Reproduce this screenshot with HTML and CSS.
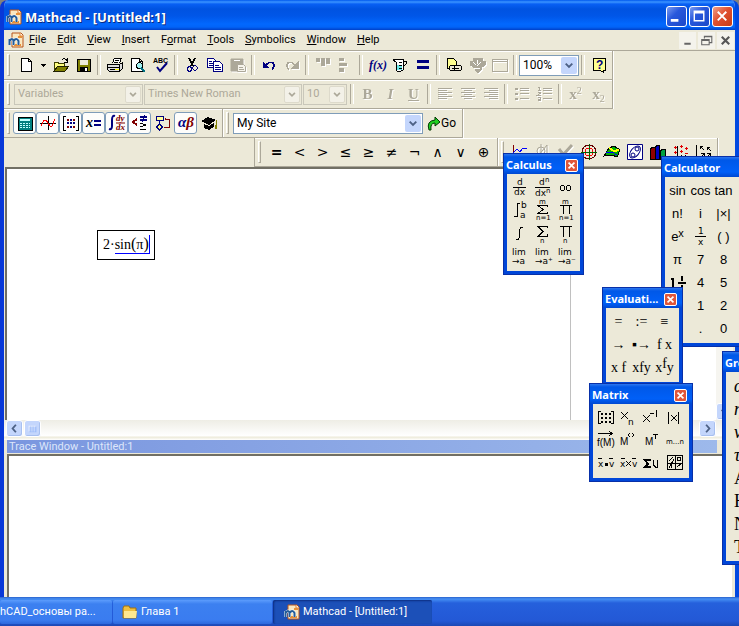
FILE: index.html
```html
<!DOCTYPE html>
<html lang="en">
<head>
<meta charset="utf-8">
<title>Mathcad - [Untitled:1]</title>
<link rel="stylesheet" href="styles.css">
</head>
<body>
<svg class="defs" aria-hidden="true">
  <symbol id="logo" viewBox="0 0 16 16">
    <path d="M4 1h9l2 2v12H4z" fill="#fbe8c0" stroke="#b8541c"/>
    <path d="M12 1v3h3" fill="#fff" stroke="#e08030"/>
    <path d="M6 13h7M10 5h4" stroke="#e89038" stroke-width="2" fill="none"/>
    <path d="M1.500 13V7M1.500 9q3-4 4 0v4M5.500 9q3-4 5 0v4" stroke="#f4f8ff" stroke-width="3" fill="none"/>
    <path d="M1.500 13V7M1.500 9q3-4 4 0v4M5.500 9q3-4 5 0v4" stroke="#245c98" stroke-width="2" fill="none"/>
  </symbol>
  <symbol id="chev" viewBox="0 0 16 18"><path d="M4.500 7l3.500 3.500L11.500 7" fill="none" stroke="currentColor" stroke-width="2"/></symbol>
  <symbol id="x" viewBox="0 0 13 13"><path d="M3 3l7 7M10 3l-7 7" stroke="#fff" stroke-width="2"/></symbol>
</svg>
<main class="window">
  <header class="titlebar">
    <svg class="ico"><use href="#logo"/></svg>
    <h1>Mathcad - [Untitled:1]</h1>
    <button class="cap" aria-label="Minimize"><svg viewBox="0 0 20 20"><path d="M4 14h8" stroke="#fff" stroke-width="3"/></svg></button>
    <button class="cap" aria-label="Maximize"><svg viewBox="0 0 20 20"><path d="M4.500 4.500h10v10h-10zM4 6h11" fill="none" stroke="#fff" stroke-width="1.500"/></svg></button>
    <button class="cap close" aria-label="Close"><svg viewBox="0 0 20 20"><path d="M5 5l9 9M14 5l-9 9" stroke="#fff" stroke-width="2"/></svg></button>
  </header>
  <nav class="menubar">
    <svg class="ico"><use href="#logo"/></svg>
    <button><u>F</u>ile</button><button><u>E</u>dit</button><button><u>V</u>iew</button><button><u>I</u>nsert</button><button>F<u>o</u>rmat</button><button><u>T</u>ools</button><button><u>S</u>ymbolics</button><button><u>W</u>indow</button><button><u>H</u>elp</button>
    <span class="mdi">
      <button aria-label="Minimize document"><svg viewBox="0 0 16 16"><path d="M5 11h6" stroke="#666" stroke-width="2"/></svg></button>
      <button aria-label="Restore document"><svg viewBox="0 0 16 16"><path d="M6 6V4h7v6h-2M6 4.500h7M3.500 7h7v5h-7zM3 8h8" fill="none" stroke="#666"/></svg></button>
      <button aria-label="Close document"><svg viewBox="0 0 16 16"><path d="M4.500 4.500l7 7M11.500 4.500l-7 7" stroke="#555" stroke-width="2"/></svg></button>
    </span>
  </nav>

  <div class="row">
    <div class="bar">
      <i class="grip"></i>
      <button aria-label="New"><svg class="ico px"><path d="M3.500 1.500h7l3 3v10h-10zM10.500 1.500v3h3" fill="#fff" stroke="#000"/></svg></button>
      <button class="narrow" aria-label="New from template"><svg class="ico px"><path d="M6 7h5v1H6zM7 8h3v1H7zM8 9h1v1H8z"/></svg></button>
      <button aria-label="Open"><svg class="ico px"><path d="M1.500 14V5h3l1 1h6v3" fill="#ffff80" stroke="#404000"/><path d="M1 14l4-5h11l-4 5z" fill="#808000" stroke="#202000"/><path d="M9 3q3-3 5 1M14 1v4h-3" fill="none" stroke="#000"/></svg></button>
      <button aria-label="Save"><svg class="ico px"><path d="M1.500 2.500h13v12h-13z" fill="#808000" stroke="#000"/><path d="M4 3h8v5H4z" fill="#ece9d8"/><path d="M4 10h8v5H4z"/><path d="M9 11h2v3H9z" fill="#fff"/></svg></button>
      <i class="sep"></i>
      <button aria-label="Print"><svg class="ico px"><path d="M5.500 6l2-5h7l-2 5" fill="#fff" stroke="#000"/><path d="M8 3h4M7 5h4" stroke="#000"/><path d="M0.500 7.500h12l3-2v6l-3 3h-10l-2-2z" fill="#ddd" stroke="#000"/><path d="M1 10h11M3 12h9M12 8v6" stroke="#000"/><path d="M8 12h4v1H8z" fill="#ff0"/></svg></button>
      <button aria-label="Print preview"><svg class="ico px"><path d="M1.500 1.500h8l3 3v10h-11zM9.500 1.500v3h3" fill="#fff" stroke="#000"/><circle cx="9.500" cy="8.500" r="3" fill="#a0f0f0" stroke="#000"/><path d="M11 11l4 4" stroke="#007080" stroke-width="2"/></svg></button>
      <button aria-label="Check spelling"><svg class="ico"><text x="0" y="6" class="tiny">ABC</text><path d="M4 10l3 4 7-8" fill="none" stroke="#000080" stroke-width="2"/></svg></button>
      <i class="sep"></i>
      <button aria-label="Cut"><svg class="ico px"><path d="M5 1l4 8M11 1L7 9" stroke="#000" stroke-width="1.500"/><g fill="none" stroke="#000080"><circle cx="5.500" cy="12" r="2.200"/><circle cx="11" cy="11" r="2.200"/></g></svg></button>
      <button aria-label="Copy"><svg class="ico px"><g fill="#fff" stroke="#000080"><path d="M.5 1.500h6l3 3v6h-9z"/><path d="M6.500 4.500h6l3 3v7h-9z"/></g><path d="M2 4h3M2 6h4M2 8h4M8 8h4M8 10h6M8 12h6" stroke="#000080"/></svg></button>
      <button aria-label="Paste" disabled><svg class="ico"><path d="M1 2h12v12H1z" fill="#aca899"/><path d="M4 3.500h6" stroke="#fff"/><path d="M7.500 7.500h6l2 2v5h-8zM9 10.500h4M9 12.500h5" fill="#f6f4ec"/></svg></button>
      <i class="sep"></i>
      <button aria-label="Undo"><svg class="ico px"><path d="M2 5v6h6z" fill="#000080"/><path d="M5 8q3-4 7-2q3 3-1 6" fill="none" stroke="#000080" stroke-width="1.500"/></svg></button>
      <button aria-label="Redo" disabled><svg class="ico px"><path d="M14 5v6H8z" fill="#aca899"/><path d="M11 8q-3-4-7-2q-3 3 1 6" fill="none" stroke="#aca899" stroke-width="1.500"/></svg></button>
      <i class="sep"></i>
      <button aria-label="Align across" disabled><svg class="ico solid"><path d="M1 1h4v4H1zM6 1h4v8H6zM11 1h4v6h-4z" fill="#aca899"/></svg></button>
      <button aria-label="Align down" disabled><svg class="ico solid"><path d="M1 1h5v3H1zM1 6h8v3H1zM1 11h5v4H1z" fill="#aca899"/></svg></button>
      <i class="sep"></i>
      <button aria-label="Insert function"><svg class="ico"><text x="0" y="12" class="fx">f(x)</text></svg></button>
      <button aria-label="Insert unit"><svg class="ico px"><path d="M1 3l2-1h8v11l-2 1H5l-1-1V5z" fill="#fff" stroke="#000"/><path d="M5 8h5v5H5z" fill="#6ce8e8"/><path d="M11 4h3v3l-3 3M7 5h3M7 8h3M7 11h3" fill="none" stroke="#000"/></svg></button>
      <button aria-label="Calculate"><svg class="ico px"><path d="M2 3h12v3H2zM2 9h12v3H2z" fill="#000080"/></svg></button>
      <i class="sep"></i>
      <button aria-label="Insert hyperlink"><svg class="ico px"><path d="M1.500 1.500h6l3 3v7h-9z" fill="#ffff90" stroke="#000"/><g fill="#ece9d8" stroke="#000"><rect x="3.500" y="8.500" width="7" height="5" rx="2"/><rect x="8.500" y="8.500" width="7" height="5" rx="2"/><path d="M6 11.500h7"/></g></svg></button>
      <button aria-label="Insert component" disabled><svg class="ico px"><path d="M1 4h3V1h4v3h1V1h4v3h3v4l-4 3v2l-3 3-3-3v-2L1 8z" fill="#aca899"/><path d="M4 5l3 3M12 5L8 9M6 11h5M8 3v4" class="light"/></svg></button>
      <button aria-label="Insert area" disabled><svg class="ico px"><path d="M.5 2.500h15v12H.5zM1 4h14" fill="none"/></svg></button>
      <i class="sep"></i>
      <label class="combo zoom"><select aria-label="Zoom"><option>100%</option></select><svg><use href="#chev"/></svg></label>
      <i class="sep"></i>
      <button aria-label="Help"><svg class="ico px"><path d="M2.500 1.500h12v12h-2v2l-3-2h-7z" fill="#ffff90" stroke="#000"/><text x="5" y="12" class="q">?</text></svg></button>
    </div>
  </div>

  <div class="row">
    <div class="bar">
      <i class="grip"></i>
      <label class="combo off style"><select aria-label="Style" disabled><option>Variables</option></select><svg><use href="#chev"/></svg></label>
      <label class="combo off face"><select aria-label="Font" disabled><option>Times New Roman</option></select><svg><use href="#chev"/></svg></label>
      <label class="combo off size"><select aria-label="Font size" disabled><option>10</option></select><svg><use href="#chev"/></svg></label>
      <i class="sep"></i>
      <button class="fmt" disabled><b>B</b></button>
      <button class="fmt" disabled><b><em>I</em></b></button>
      <button class="fmt" disabled><b><u>U</u></b></button>
      <i class="sep"></i>
      <button aria-label="Align left" disabled><svg class="ico px"><path d="M1 2.500h14M1 4.500h9M1 6.500h14M1 8.500h9M1 10.500h14M1 12.500h9"/></svg></button>
      <button aria-label="Center" disabled><svg class="ico px"><path d="M1 2.500h14M4 4.500h8M1 6.500h14M4 8.500h8M1 10.500h14M4 12.500h8"/></svg></button>
      <button aria-label="Align right" disabled><svg class="ico px"><path d="M1 2.500h14M6 4.500h9M1 6.500h14M6 8.500h9M1 10.500h14M6 12.500h9"/></svg></button>
      <i class="sep"></i>
      <button aria-label="Bullets" disabled><svg class="ico px"><path d="M6 2.500h9M6 4.500h9M6 7.500h9M6 12.500h9M1 2.500h3M1 3.500h3M1 7.500h3M1 8.500h3M1 12.500h3M1 13.500h3"/></svg></button>
      <button aria-label="Numbering" disabled><svg class="ico px"><path d="M6 2.500h9M6 4.500h9M6 7.500h9M6 12.500h9"/><path d="M1 1.500h1v3M1 4.500h3M1 6.500h2v1l-2 1.500h3M1 11.500h2v3H1M1 13h2"/></svg></button>
      <i class="sep"></i>
      <button class="fmt" disabled><b>x</b><sup>2</sup></button>
      <button class="fmt" disabled><b>x</b><sub>2</sub></button>
    </div>
  </div>

  <div class="row">
    <div class="bar math">
      <i class="grip"></i>
      <button class="on" aria-label="Calculator"><svg class="ico px"><path d="M1 2h14v13H1z" fill="#008080" stroke="#000"/><path d="M3 4h10v2H3z" fill="#c0ffff"/><path d="M3 8.500h10M3 10.500h10M3 12.500h10" stroke="#c0ffff" stroke-dasharray="2 1"/></svg></button>
      <button class="on" aria-label="Graph"><svg class="ico px"><path d="M0 8.500h16M8.500 1v14" stroke="#000"/><path d="M1 11l3-6h2l4 6h2l3-7" fill="none" stroke="#f00"/></svg></button>
      <button class="on" aria-label="Matrix"><svg class="ico px"><path d="M3 1H.5v14H3M13 1h2.500v14H13" fill="none" stroke="#000"/><path d="M4 4h2v2H4zM10 4h2v2h-2zM4 11h2v2H4zM10 11h2v2h-2z" fill="#800000"/><path d="M7 4h2v2H7zM4 7h2v2H4zM7 7h2v2H7zM10 7h2v2h-2zM7 11h2v2H7z" fill="#000080"/></svg></button>
      <button class="on" aria-label="Evaluation"><svg class="ico"><text x="0" y="12" class="xe">x</text><path d="M8 6h7M8 10h7" stroke="#000080" stroke-width="2"/></svg></button>
      <button class="on" aria-label="Calculus"><svg class="ico"><path d="M6 1q-3-1-3 4v6q0 4-3 3" fill="none" stroke="#000080" stroke-width="2"/><path d="M7 8h9" stroke="#800000"/><text x="7" y="6" class="dy">dy</text><text x="7" y="15" class="dy">dx</text></svg></button>
      <button class="on" aria-label="Boolean"><svg class="ico px"><path d="M5 4L1 7l4 3" fill="none" stroke="#800000" stroke-width="2"/><path d="M8 2h7M8 5h7" stroke="#000080" stroke-width="2"/><path d="M13 0l-3 7" stroke="#000080"/><path d="M8 8l6 2-6 2M8 14.500h6" fill="none" stroke="#000"/></svg></button>
      <button aria-label="Programming"><svg class="ico px"><path d="M1 1.500h7v4H1z" fill="#ffffa0" stroke="#000080"/><path d="M4.500 6v3M4.500 9l3 3-3 3-3-3z" fill="#ffff80" stroke="#000080"/><path d="M10 4h4v8H9" fill="none" stroke="#800000"/><path d="M9 4l2-2v4z" fill="#800000"/></svg></button>
      <button class="on" aria-label="Greek"><svg class="ico"><text x="0" y="12" class="ab" fill="#000080">α<tspan fill="#800000">β</tspan></text></svg></button>
      <button aria-label="Symbolic"><svg class="ico px"><path d="M0 6l7-4 8 3-7 5z"/><path d="M3 9l5 2 5-3v4l-5 3-5-2z"/><path d="M15 5v5" stroke="#808000"/><path d="M14 10h2v4h-2z" fill="#808000"/></svg></button>
    </div>
    <div class="bar">
      <i class="grip"></i>
      <label class="combo site"><select aria-label="Resources"><option>My Site</option></select><svg><use href="#chev"/></svg></label>
      <button class="go"><svg class="ico"><path d="M3 15q-3-9 6-10V2l5 5-5 4V8q-5 0-4 7z" fill="#20d020" stroke="#003800"/></svg>Go</button>
    </div>
  </div>

  <div class="row right">
    <div class="bar bool">
      <i class="grip"></i>
      <button><b>=</b></button><button>&lt;</button><button>&gt;</button><button>≤</button><button>≥</button><button>≠</button><button>¬</button><button>∧</button><button>∨</button><button>⊕</button>
    </div>
    <div class="bar">
      <i class="grip"></i>
      <button aria-label="X-Y plot"><svg class="ico px"><path d="M1.500 1v12M0 12.500h15" stroke="#800000"/><path d="M1 9l4-4 3 3 3-4h4" fill="none" stroke="#00f"/></svg></button>
      <button aria-label="Zoom graph" disabled><svg class="ico"><circle cx="6" cy="7" r="4"/><path d="M6 0v15M3 12l9-11M12 1v13"/></svg></button>
      <button aria-label="Trace" disabled><svg class="ico thick"><path d="M1 5l5 6M5 11l9-10"/></svg></button>
      <button aria-label="Polar plot"><svg class="ico px"><circle cx="8" cy="8" r="7" fill="none" stroke="#600000"/><circle cx="8" cy="8" r="4" fill="none" stroke="#f00"/><path d="M0 8h16M8 0v16" stroke="#006000"/></svg></button>
      <button aria-label="Surface plot"><svg class="ico px"><path d="M0 12l5-8 5-2 6 4-3 7-5-2z" fill="#00b000" stroke="#000"/><path d="M5 4l5 3 5-1" stroke="#ff0" stroke-width="2" fill="none"/><path d="M2 9l6-1 5 3" stroke="#00f" fill="none"/></svg></button>
      <button aria-label="Contour plot"><svg class="ico"><path d="M.5.500h15v15H.5z" fill="#fff" stroke="#000080"/><g fill="none" stroke="#000080"><ellipse cx="8" cy="8" rx="7" ry="4" transform="rotate(-50 8 8)"/><circle cx="10" cy="5" r="2"/><circle cx="6" cy="11" r="2"/></g></svg></button>
      <button aria-label="Bar plot"><svg class="ico px"><path d="M.5 5l2-2h3v12h-5z" fill="#900000" stroke="#000"/><path d="M5.500 3l2-2h2v14h-4z" fill="#0000c0" stroke="#000"/><path d="M10.500 7l2-2h3v10h-5z" fill="#00a040" stroke="#000"/></svg></button>
      <button aria-label="Scatter plot"><svg class="ico px"><path d="M4.500 2v12M2 13.500h14M8.500 11v4M12.500 11v4" stroke="#000"/><path d="M1 3.500h3M2.500 2v3M7 2.500h3M8.500 1v3M12 4.500h3M13.500 3v3M7 7.500h3M8.500 6v3M1 8.500h3M2.500 7v3M12 9.500h3" stroke="#e00000"/></svg></button>
      <button aria-label="Vector field plot"><svg class="ico px"><path d="M.5 1v14M4 5V2h3M4 2l4 4M11 6V3h3M11 3l4 4M5 14l3-4M5 9h3v3M11 14l3-4M11 9h3v3" fill="none" stroke="#000"/></svg></button>
    </div>
  </div>

  <section class="doc">
    <div class="sheet">
      <div class="region">2·<span class="edit">sin<span class="par">(</span>π<span class="par">)</span></span></div>
      <i class="margin"></i>
    </div>
    <div class="vscroll"><button class="sb" aria-label="Scroll down"><svg><use href="#chev"/></svg></button></div>
  </section>
  <div class="hscroll">
    <button class="sb" aria-label="Scroll left"><svg viewBox="0 0 16 16"><path d="M9.500 4L6 8l3.500 4" fill="none" stroke="#4d6185" stroke-width="2"/></svg></button>
    <button class="sb" aria-label="Scroll thumb"><svg viewBox="0 0 16 16"><path d="M4.500 5v6M6.500 5v6M8.500 5v6M10.500 5v6" stroke="#fff"/><path d="M5.500 6v6M7.500 6v6M9.500 6v6M11.500 6v6" stroke="#8cb0f8"/></svg></button>
    <i></i>
    <button class="sb" aria-label="Scroll right"><svg viewBox="0 0 16 16"><path d="M6.500 4L10 8l-3.500 4" fill="none" stroke="#4d6185" stroke-width="2"/></svg></button>
  </div>
  <h2 class="tracecap">Trace Window - Untitled:1</h2>
  <section class="trace"></section>
</main>

<footer class="taskbar">
  <button class="first">hCAD_основы ра...</button>
  <button><svg class="ico"><path d="M1 4l1-2h5l1 2h6v10H1z" fill="#f0c040" stroke="#a07010"/><path d="M2 7h13l-1 7H2z" fill="#ffe890"/></svg>Глава 1</button>
  <button class="active"><svg class="ico"><use href="#logo"/></svg>Mathcad - [Untitled:1]</button>
</footer>

<aside class="pal calculator">
  <header><h3>Calculator</h3></header>
  <div class="keys big">
    <button>sin</button><button>cos</button><button>tan</button>
    <button>n!</button><button>i</button><button>|×|</button>
    <button>e<sup>x</sup></button><button aria-label="Reciprocal"><svg class="key"><text x="9" y="9" class="s">1</text><path d="M6 11.500h11"/><text x="9" y="20" class="s">x</text></svg></button><button>( )</button>
    <button>π</button><button>7</button><button>8</button>
    <button aria-label="Mixed number"><svg class="key"><path d="M7 7v10M5 8h2M12 12h8M16 5v5M16 14v5" stroke-width="2"/></svg></button><button>4</button><button>5</button>
    <i></i><button>1</button><button>2</button>
    <i></i><button>.</button><button>0</button>
  </div>
</aside>
<aside class="pal calculus">
  <header><h3>Calculus</h3><button class="pclose" aria-label="Close Calculus"><svg><use href="#x"/></svg></button></header>
  <div class="keys">
    <button aria-label="Derivative"><svg class="key"><text x="9" y="9" class="s">d</text><path d="M5 11.500h13"/><text x="6" y="19" class="s">dx</text></svg></button>
    <button aria-label="Nth derivative"><svg class="key"><text x="8" y="9" class="s">d</text><text x="14" y="6" class="t">n</text><path d="M4 11.500h15"/><text x="4" y="20" class="s">dx</text><text x="15" y="17" class="t">n</text></svg></button>
    <button aria-label="Infinity"><svg class="key"><g fill="none" stroke="#000"><circle cx="8.500" cy="12" r="2.500"/><circle cx="14.500" cy="12" r="2.500"/></g></svg></button>
    <button aria-label="Definite integral"><svg class="key"><path d="M12 4.500h-2.500V17.500H6" fill="none"/><text x="13" y="9" class="s">b</text><text x="12" y="19" class="s">a</text></svg></button>
    <button aria-label="Summation"><svg class="key"><text x="8" y="5" class="t">m</text><path d="M16 8V6.500H7l5 4-5 4h9V13" fill="none"/><text x="5" y="21" class="t">n=1</text></svg></button>
    <button aria-label="Iterated product"><svg class="key"><text x="8" y="5" class="t">m</text><path d="M6 6.500h12M9.500 6v9M15.500 6v9"/><text x="5" y="21" class="t">n=1</text></svg></button>
    <button aria-label="Indefinite integral"><svg class="key"><path d="M15 5.500h-2l-1.500 2v8l-1.500 2H8" fill="none"/></svg></button>
    <button aria-label="Range sum"><svg class="key"><path d="M16 6V4.500H7l5 5-5 5h9V12" fill="none"/><text x="9" y="21" class="t">n</text></svg></button>
    <button aria-label="Range product"><svg class="key"><path d="M6 4.500h12M9.500 4v11M15.500 4v11"/><text x="9" y="21" class="t">n</text></svg></button>
    <button class="lim">lim<br>→a</button><button class="lim">lim<br>→a⁺</button><button class="lim">lim<br>→a⁻</button>
  </div>
</aside>
<aside class="pal evaluation">
  <header><h3>Evaluati...</h3><button class="pclose" aria-label="Close Evaluation"><svg><use href="#x"/></svg></button></header>
  <div class="keys serif">
    <button>=</button><button>:=</button><button>≡</button>
    <button>→</button><button>▪→</button><button>f x</button>
    <button>x f</button><button>xfy</button><button>x<sup>f</sup>y</button>
  </div>
</aside>
<aside class="pal matrix">
  <header><h3>Matrix</h3><button class="pclose" aria-label="Close Matrix"><svg><use href="#x"/></svg></button></header>
  <div class="keys four">
    <button aria-label="Insert matrix"><svg class="key"><path d="M7 5.500H4.500v12H7M17 5.500h2.500v12H17" fill="none"/><path d="M7 8h10M7 12h10M7 16h10" stroke-width="2" stroke-dasharray="2 2"/></svg></button>
    <button aria-label="Subscript"><svg class="key"><path d="M4 6l7 7M11 6l-7 7"/><text x="11" y="19" class="s">n</text></svg></button>
    <button aria-label="Inverse"><svg class="key"><path d="M3 9l7 7M10 9l-7 7"/><path d="M10 7.500h4M16.500 4v7"/></svg></button>
    <button aria-label="Determinant"><svg class="key"><path d="M5.500 6v12M15.500 6v12M8 9l6 6M14 9l-6 6"/></svg></button>
    <button aria-label="Vectorize"><svg class="key"><path d="M4 4.500h14M15 2l3 2.500L15 7" fill="none"/><text x="3" y="17" class="f">f(M)</text></svg></button>
    <button aria-label="Matrix column"><svg class="key"><text x="3" y="16" class="f">M</text><path d="M13 4l-2 2 2 2M15 4l2 2-2 2" fill="none"/></svg></button>
    <button aria-label="Transpose"><svg class="key"><text x="5" y="16" class="f">M</text><path d="M13 5.500h5M15.500 5v5"/></svg></button>
    <button aria-label="Range variable"><svg class="key"><text x="3" y="15" class="t">m...n</text></svg></button>
    <button aria-label="Dot product"><svg class="key"><path d="M4 6.500h4M15 6.500h4M11 11h2v2h-2z"/><text x="4" y="15" class="s">x</text><text x="15" y="15" class="s">v</text></svg></button>
    <button aria-label="Cross product"><svg class="key"><path d="M4 6.500h4M15 6.500h4M9 9l5 5M14 9l-5 5"/><text x="3" y="15" class="s">x</text><text x="15" y="15" class="s">v</text></svg></button>
    <button aria-label="Vector sum"><svg class="key"><path d="M11 8H5l3 4-3 3h6" fill="none" stroke-width="2"/><path d="M13.500 8v5l2 2h2V8" fill="none"/></svg></button>
    <button aria-label="Picture"><svg class="key"><path d="M4.500 3.500h15v14h-15zM5 11h14M12 4v13M6 9l4-4M14 15l4-3M6 16l5-9M8 12v4" fill="none"/><circle cx="16" cy="7" r="2" fill="none" stroke="#000"/></svg></button>
  </div>
</aside>
<aside class="pal greek">
  <header><h3>Greek</h3></header>
  <div class="keys one">
    <button><em>α</em></button><button><em>η</em></button><button><em>ν</em></button><button><em>τ</em></button><button>Α</button><button>Η</button><button>Ν</button><button>Τ</button>
  </div>
</aside>
</body>
</html>
```
FILE: styles.css
```css
* { box-sizing: border-box; }
body {
  margin: 0;
  height: 100vh;
  display: flex;
  flex-direction: column;
  overflow: hidden;
  position: relative;
  background: #84827a;
  color: #000;
  font: 11px/16px Roboto, "Noto Sans", sans-serif;
}
button { padding: 0; border: 0; background: none; color: inherit; font: inherit; }
h1, h2, h3 { margin: 0; font-size: inherit; white-space: nowrap; }
svg { display: block; overflow: visible; }
.defs { position: absolute; width: 0; height: 0; }
.ico { width: 16px; height: 16px; flex: none; }
.px, .key { shape-rendering: crispEdges; }

.window {
  flex: 1;
  min-height: 0;
  display: flex;
  flex-direction: column;
  border: 4px solid #0048e0;
  border-width: 0 4px;
  border-left-color: #0838d8;
  border-radius: 8px 8px 0 0;
  background: #ece9d8;
  overflow: hidden;
}
.titlebar {
  flex: none;
  height: 30px;
  margin: 0 -4px;
  padding: 3px 6px 0;
  display: flex;
  align-items: center;
  gap: 2px;
  background: linear-gradient(#0058ee 0, #3b94ff 2px, #0860f4 4px, #0053e1 9px, #0056e8 16px, #0268fe 24px, #0264f8 27px, #0040c8 30px);
}
.titlebar h1 { flex: 1; margin-left: 1px; color: #fff; font: bold 13px/16px "Noto Sans", sans-serif; text-shadow: 1px 1px #0a2a80; }
.cap {
  width: 21px;
  height: 21px;
  border: 1px solid #fff;
  border-radius: 3px;
  background: linear-gradient(135deg, #7c9cf0, #2858dc 40%, #1c48c8);
}
.cap.close { background: linear-gradient(135deg, #f0a088, #e05030 45%, #c83c14); }
.menubar {
  flex: none;
  height: 21px;
  padding: 0 4px;
  display: flex;
  align-items: center;
  gap: 11px;
  border-bottom: 1px solid #aca899;
}
.menubar .ico { margin-right: -6px; }
.mdi { margin-left: auto; margin-right: -3px; display: flex; gap: 2px; }
.mdi button { width: 17px; height: 17px; background: #f4f3ec; }

.row { flex: none; height: 29px; display: flex; }
.bar {
  display: flex;
  align-items: center;
  padding: 0 2px;
  border: solid #aca899;
  border-width: 0 1px 1px 0;
  box-shadow: inset 0 1px #fff, 1px 0 #fff;
}
.row.right { margin-left: 250px; border-left: 1px solid #aca899; }
.grip { width: 3px; height: 22px; margin: 0 4px 0 1px; border: 1px solid #fff; border-right-color: #aca899; border-bottom-color: #aca899; }
.math .grip { margin-right: 3px; }
.sep { width: 8px; height: 20px; position: relative; display: flex; justify-content: center; }
.sep::before { content: ""; width: 2px; border-left: 1px solid #aca899; border-right: 1px solid #fff; }
.bar button { width: 23px; height: 22px; display: flex; align-items: center; justify-content: center; }
.bar .narrow { width: 12px; }
.bar .on { border: 1px solid #7f9db9; border-radius: 3px; background: #fdfdfb; }
.bar .go { width: auto; padding: 0 4px 0 3px; font-size: 12px; }
.go .ico { margin-right: -1px; }
.bar button:disabled { color: #aca899; filter: drop-shadow(1px 1px 0 #fff); }
.bar button:disabled svg { stroke: #aca899; fill: none; }
.bar button:disabled .solid { stroke: none; }
.thick { stroke-width: 3; }
.light { stroke: #fff; }
.fmt { font-family: "Liberation Serif", serif; font-size: 15px; }
.bar .fmt { font: 15px/20px "Liberation Serif", serif; }
.fmt sup, .fmt sub { font-size: 10px; line-height: 8px; }
.fmt sup { align-self: flex-start; margin-top: 4px; }
.fmt sub { align-self: flex-end; margin-bottom: 2px; }
.bar.bool button { font: 14px/20px "DejaVu Sans", sans-serif; }
.tiny { font: bold 7px "Liberation Sans", sans-serif; }
.fx { font: italic bold 12px "Liberation Serif", serif; fill: #000080; }
.xe { font: italic bold 14px "Liberation Serif", serif; }
.q { font: bold 12px "Liberation Sans", sans-serif; fill: #000080; }
.dy { font: italic bold 9px "Liberation Serif", serif; fill: #800000; }
.ab { font: italic bold 15px "Liberation Serif", serif; }

.combo { display: grid; height: 21px; border: 1px solid #7f9db9; background: #fff; color: #4d6185; }
.combo > * { grid-area: 1 / 1; }
.combo select { appearance: none; min-width: 0; border: 0; padding: 0 3px; background: none; color: #000; font: inherit; font-size: 12px; opacity: 1; }
.combo svg { justify-self: end; align-self: center; width: 16px; height: 17px; margin-right: 1px; border-radius: 2px; background: #c4d6fc; pointer-events: none; }
.combo.off { border-color: #c9c7ba; background: #ece9d8; color: #aca899; margin-right: 1px; }
.combo.off select { color: #aca899; font-size: 11px; }
.combo.off svg { background: #f3f1e8; border: 1px solid #dddacb; }
.zoom { width: 60px; }
.style { width: 129px; }
.face { width: 158px; }
.size { width: 44px; }
.site { width: 190px; }

.doc { flex: 254; min-height: 0; margin-left: 1px; display: flex; border: solid #716f64; border-width: 2px 0 0 2px; }
.sheet { flex: 1; position: relative; background: #fff; }
.margin { position: absolute; top: 0; bottom: 0; left: 563px; width: 1px; background: #c0c0c0; }
.region {
  position: absolute;
  left: 90px;
  top: 61px;
  height: 30px;
  padding: 4px 4px 4px 5px;
  border: 1px solid #000;
  font: 14px/18px "Liberation Serif", serif;
  white-space: nowrap;
}
.edit { display: inline-block; height: 19px; border: solid #00f; border-width: 0 1px 1px 0; }
.par { font-size: 16px; }
.vscroll { width: 17px; margin-right: 2px; display: flex; align-items: flex-end; background: #f6f5f0; }
.sb { width: 17px; height: 17px; flex: none; border: 1px solid #fff; border-radius: 3px; background: #c4d6fc; box-shadow: inset -1px -1px #a8c0f0; color: #4d6185; }
.sb svg { width: 15px; height: 15px; }
.hscroll { flex: none; height: 20px; padding: 0 19px 0 2px; display: flex; gap: 1px; background: linear-gradient(#eeede5, #fff 16px, #ece9d8 17px, #fff 20px); }
.hscroll i { flex: 1; }
.tracecap { flex: none; height: 13px; margin: 0 18px 0 3px; background: linear-gradient(90deg, #7a96df, #9db9eb); color: #dde6fa; font-size: 11px; line-height: 13px; font-weight: 400; padding-left: 2px; }
.trace { flex: 142; margin: 1px 3px 0 3px; border: solid #716f64; border-width: 2px 0 0 2px; background: #fff; }

.taskbar { flex: none; height: 29px; display: flex; align-items: center; gap: 1px; background: linear-gradient(#2a62cc, #4690f4 2px, #2560dc 6px, #2358d6 24px, #1c48b4); color: #fff; }
.taskbar button { width: 159px; height: 24px; padding-left: 9px; display: flex; align-items: center; gap: 3px; border-radius: 2px; background: linear-gradient(#5c9cfc, #3c80f0 4px, #3a7cf0 20px, #2c68dc); white-space: nowrap; }
.taskbar .first { width: 112px; padding-left: 0; }
.taskbar .active { padding-left: 11px; background: #1c50b8; box-shadow: inset 1px 1px 2px #0c2c80; }

.pal { position: absolute; border: 4px solid #0046d8; border-top: 0; background: #ece9d8; outline: 1px solid #0830a8; outline-offset: -1px; }
.pal header { height: 21px; margin: 0 -4px; padding: 3px 6px 0 3px; display: flex; align-items: center; justify-content: space-between; background: linear-gradient(#3c80f0, #0058e8 4px, #0060f8 16px, #0048d0); color: #fff; }
.pal h3 { font: bold 11px/16px "Noto Sans", sans-serif; }
.pclose { width: 13px; height: 13px; border: 1px solid #fff; border-radius: 2px; background: #e0573a; }
.pclose svg { width: 11px; height: 11px; }
.keys { display: grid; grid-template-columns: repeat(3, 23px); grid-auto-rows: 23px; padding: 2px 3px 3px 1px; }
.keys.four { grid-template-columns: repeat(4, 23px); }
.keys button { display: flex; align-items: center; justify-content: center; white-space: nowrap; }
.key { width: 23px; height: 23px; stroke: #000; }
.key text { stroke: none; }
.t { font: 7px "DejaVu Sans", sans-serif; }
.s { font: 9px "DejaVu Sans", sans-serif; }
.f { font: 10px "Liberation Sans", sans-serif; }
.big { font: 13px/20px "Liberation Sans", sans-serif; }
.big sup { font-size: 11px; line-height: 8px; margin-bottom: 7px; }
.serif { font: 14px/20px "Liberation Serif", serif; }
.serif sup { font-size: 14px; line-height: 8px; margin-bottom: 7px; }
.keys .lim { display: block; font: 9px/9px "DejaVu Sans", sans-serif; text-align: left; padding-left: 4px; }
.calculus { left: 503px; top: 153px; }
.calculator { left: 661px; top: 156px; width: 104px; }
.evaluation { left: 602px; top: 287px; }
.matrix { left: 589px; top: 383px; }
.greek { left: 722px; top: 351px; width: 152px; }
.greek .keys { grid-template-columns: 27px; font: 18px/20px "Liberation Serif", serif; }
.greek .keys button { justify-content: flex-start; padding-left: 7px; }
```
